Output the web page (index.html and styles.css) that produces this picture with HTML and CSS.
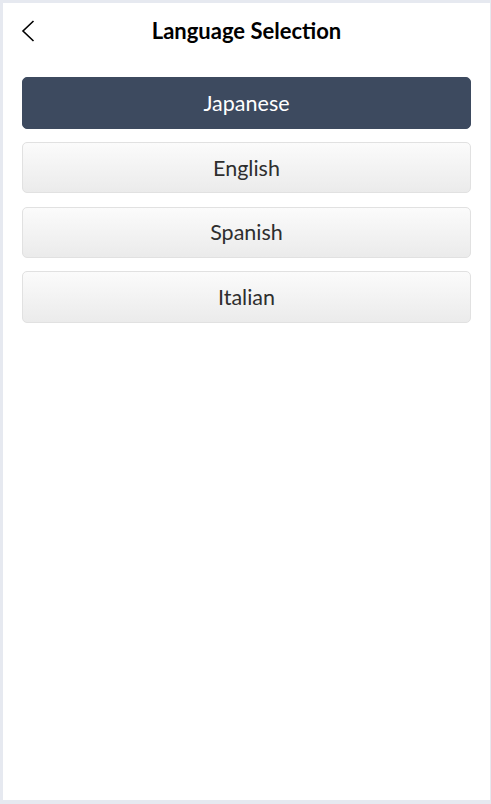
FILE: index.html
```html
<!DOCTYPE html>
<html>
<head>
<meta charset="utf-8">
<link rel="stylesheet" href="styles.css">
</head>
<body>
<div class="panel">
  <header class="header">
    <button class="back" aria-label="Back">
      <svg width="14" height="22" viewBox="0 0 14 22"><path d="M12.5 1 L2 11 L12.5 21" fill="none" stroke="#000" stroke-width="1.6"/></svg>
    </button>
    <h1 class="title">Language Selection</h1>
  </header>
  <div class="list">
    <div class="option selected">Japanese</div>
    <div class="option">English</div>
    <div class="option">Spanish</div>
    <div class="option">Italian</div>
  </div>
</div>
</body>
</html>
```
FILE: styles.css
```css
html, body {
  margin: 0;
  padding: 0;
  height: 100%;
}
body {
  background: #e6e9f0;
  padding: 3px 1px 4px 3px;
  box-sizing: border-box;
  font-family: Lato, "Noto Sans", sans-serif;
}
.panel {
  background: #fff;
  height: 100%;
  box-sizing: border-box;
  padding: 0 19px;
}
.header {
  position: relative;
  height: 56px;
  display: flex;
  align-items: center;
  justify-content: center;
}
.back {
  position: absolute;
  left: -1px;
  top: 17px;
  background: none;
  border: none;
  padding: 0;
  width: 14px;
  height: 22px;
  display: flex;
}
.title {
  margin: 0;
  font-size: 22px;
  font-weight: 700;
  color: #000;
  padding-bottom: 2px;
}
.list {
  margin-top: 18px;
  display: flex;
  flex-direction: column;
  gap: 13.33px;
}
.option {
  height: 51.5px;
  box-sizing: border-box;
  border-radius: 5px;
  border: 1px solid #e1e1e1;
  background: linear-gradient(#fbfbfb, #ebebeb);
  display: flex;
  align-items: center;
  justify-content: center;
  font-size: 21.5px;
  color: #2e2e2e;
}
.option.selected {
  background: #3d4a5f;
  border-color: #3d4a5f;
  color: #fff;
}
```
